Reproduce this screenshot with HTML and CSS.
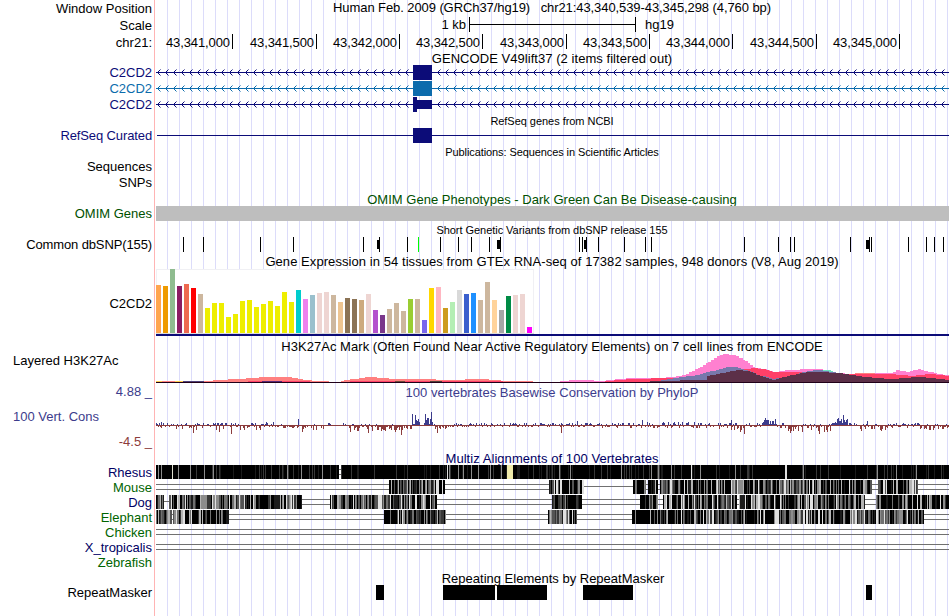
FILE: index.html
```html
<!DOCTYPE html>
<html lang="en">
<head>
    <meta charset="UTF-8">
    <title>chr21:43,340,539-43,345,298</title>
    <link rel="stylesheet" href="styles.css">
</head>
<body>
<div class="browser">
    <div class="row h17"><span class="label">Window Position</span><span class="title t-pos">Human Feb. 2009 (GRCh37/hg19) &nbsp; chr21:43,340,539-43,345,298 (4,760 bp)</span></div>
    <div class="row h17"><span class="label">Scale</span><svg id="scale" class="track"></svg></div>
    <div class="row h17"><span class="label">chr21:</span><svg id="ruler" class="track"></svg></div>

    <!-- genes -->
    <div class="row h14"><span class="label"></span><span class="title t-gencode">GENCODE V49lift37 (2 items filtered out)</span></div>
    <div class="row"><span class="label navy">C2CD2</span><svg id="gene1" class="track"></svg></div>
    <div class="row"><span class="label sky">C2CD2</span><svg id="gene2" class="track"></svg></div>
    <div class="row"><span class="label navy">C2CD2</span><svg id="gene3" class="track"></svg></div>
    <div class="row h15"><span class="label"></span><span class="title small t-refseq">RefSeq genes from NCBI</span></div>
    <div class="row"><span class="label navy tight">RefSeq Curated</span><svg id="refseq" class="track"></svg></div>
    <div class="row h15"><span class="label"></span><span class="title small t-pubs">Publications: Sequences in Scientific Articles</span></div>
    <div class="row"><span class="label">Sequences</span></div>
    <div class="row"><span class="label">SNPs</span></div>
    <div class="row h15"><span class="label"></span><span class="title green t-omim">OMIM Gene Phenotypes - Dark Green Can Be Disease-causing</span></div>
    <div class="row"><span class="label green">OMIM Genes</span><svg id="omim" class="track"></svg></div>
    <div class="row h15"><span class="label"></span><span class="title small t-snp">Short Genetic Variants from dbSNP release 155</span></div>
    <div class="row"><span class="label tight">Common dbSNP(155)</span><svg id="snp" class="track"></svg></div>

    <!-- expression and regulation -->
    <div class="row"><span class="label"></span><span class="title t-gtex">Gene Expression in 54 tissues from GTEx RNA-seq of 17382 samples, 948 donors (V8, Aug 2019)</span></div>
    <div class="row h69"><span class="label">C2CD2</span><svg id="gtex" class="track"></svg></div>
    <div class="row"><span class="label"></span><span class="title t-h3k">H3K27Ac Mark (Often Found Near Active Regulatory Elements) on 7 cell lines from ENCODE</span></div>
    <div class="row h30"><span class="label left">Layered H3K27Ac</span><svg id="h3k" class="track"></svg></div>

    <!-- conservation -->
    <div class="row"><span class="label blue">4.88 _</span><span class="title blue t-phylop">100 vertebrates Basewise Conservation by PhyloP</span></div>
    <div class="row h50">
        <div class="label stack"><span class="left blue">100 Vert. Cons</span><span class="brown">-4.5 _</span></div>
        <svg id="phylop" class="track"></svg>
    </div>
    <div class="row h15"><span class="label"></span><span class="title darkblue t-multiz">Multiz Alignments of 100 Vertebrates</span></div>
    <div class="row h15"><span class="label darkblue">Rhesus</span><svg id="rhesus" class="track"></svg></div>
    <div class="row h15"><span class="label green2">Mouse</span><svg id="mouse" class="track"></svg></div>
    <div class="row h15"><span class="label darkblue">Dog</span><svg id="dog" class="track"></svg></div>
    <div class="row h15"><span class="label green2">Elephant</span><svg id="elephant" class="track"></svg></div>
    <div class="row h15"><span class="label green2">Chicken</span><svg id="chicken" class="track"></svg></div>
    <div class="row h15"><span class="label darkblue">X_tropicalis</span><svg id="xtrop" class="track"></svg></div>
    <div class="row h15"><span class="label green2">Zebrafish</span></div>
    <div class="row h15"><span class="label"></span><span class="title t-rmsk">Repeating Elements by RepeatMasker</span></div>
    <div class="row"><span class="label">RepeatMasker</span><svg id="rmsk" class="track"></svg></div>
</div>
<script src="tracks.js"></script>
</body>
</html>
```
FILE: styles.css
```css
body {
    margin: 0;
    background: #fff;
    font-family: "Liberation Sans", Arial, sans-serif;
    font-size: 13px;
    color: #000;
}
/* guide lines every 12px, red line between labels and tracks */
.browser {
    width: 949px;
    height: 616px;
    overflow: hidden;
    background:
        linear-gradient(#ffb4b4, #ffb4b4) 154px 0 / 1px 100% no-repeat,
        linear-gradient(#fff, #fff) 0 0 / 156px 100% no-repeat,
        repeating-linear-gradient(to right, transparent 0, transparent 11px, #dcdcfa 11px, #dcdcfa 12px) 156px 0;
}
.row {
    display: flex;
    height: 16px;
    line-height: 16px;
    white-space: nowrap;
}
.h14 { height: 14px; line-height: 15px; }
.h15 { height: 15px; line-height: 15px; }
.h17 { height: 17px; line-height: 17px; }
.h30 { height: 30px; line-height: 14px; }
.h50 { height: 50px; line-height: 16px; }
.h69 { height: 69px; line-height: 69px; }
.label {
    flex: none;
    width: 152px;
    margin-right: 3px;
    text-align: right;
}
.tight { letter-spacing: -.12px; }
.track {
    flex: none;
    width: 794px;
    height: 100%;
    display: block;
    overflow: visible;
    shape-rendering: crispEdges;
}
#ruler { letter-spacing: -.1px; }
.title {
    flex: none;
    width: 794px;
    padding-top: 1px;
    text-align: center;
}
.small { font-size: 11px; }
.t-pos {
    padding-top: 0;
    line-height: 15px;
    letter-spacing: -.083px;
}
.t-gencode {
    padding-top: 0;
    letter-spacing: .05px;
}
.t-refseq { letter-spacing: -.04px; }
.t-pubs { letter-spacing: -.09px; }
.t-omim { letter-spacing: .02px; }
.t-snp { letter-spacing: -.045px; }
.t-gtex { letter-spacing: .066px; }
.t-h3k { letter-spacing: .047px; }
.t-phylop { letter-spacing: .02px; }
.t-multiz { letter-spacing: .055px; }
.t-rmsk { width: 796px; }
.left {
    text-align: left;
    padding-left: 13px;
    box-sizing: border-box;
}
.stack {
    display: flex;
    flex-direction: column;
    justify-content: flex-end;
    gap: 9px;
}
.navy { color: #0c0c78; }
.sky { color: #0c6cac; }
.green { color: #005000; }
.green2 { color: #006400; }
.darkblue { color: #000064; }
.blue { color: #3c3c8c; }
.brown { color: #8c3c3c; }
```
FILE: tracks.js
```js
var NS = 'http://www.w3.org/2000/svg';

// x is in page pixels, the track area starts at 155
function el(id, name, attrs, text) {
    var svg = document.getElementById(id);
    if (!svg.getAttribute('viewBox')) {
        svg.setAttribute('viewBox', '155 0 794 ' + svg.parentNode.clientHeight);
    }
    var e = document.createElementNS(NS, name);
    for (var k in attrs) e.setAttribute(k, attrs[k]);
    if (text) e.textContent = text;
    svg.appendChild(e);
}
function rect(id, x, y, w, h, fill) {
    el(id, 'rect', {x: x, y: y, width: w, height: h, fill: fill});
}
var seed = 7;
function rnd() {
    seed = (seed * 16807) % 2147483647;
    return seed / 2147483647;
}

// scale bar
rect('scale', 469, 0, 1, 15, '#000');
rect('scale', 635, 0, 1, 15, '#000');
rect('scale', 469, 7, 167, 1, '#000');
el('scale', 'text', {x: 466, y: 12, 'text-anchor': 'end'}, '1 kb');
el('scale', 'text', {x: 645, y: 12}, 'hg19');

// ruler
[232, 316, 399, 482, 566, 649, 732, 816, 899].forEach(function (x, i) {
    var bp = 43341000 + i * 500;
    rect('ruler', x, 0, 1, 15, '#000');
    el('ruler', 'text', {x: x - 2, y: 13, 'text-anchor': 'end'}, bp.toLocaleString('en-US'));
});

// genes
function gene(id, color) {
    rect(id, 156, 7, 793, 1, color);
    for (var x = 157; x < 948; x += 8) {
        if (x > 408 && x < 432) continue;
        rect(id, x + 1, 6, 1, 3, color);
        rect(id, x + 2, 5, 1, 1, color);
        rect(id, x + 2, 9, 1, 1, color);
        el(id, 'path', {d: 'M' + (x + 3) + ' 4h1v1h-1zM' + (x + 3) + ' 10h1v1h-1z', fill: color, opacity: .5});
    }
}
gene('gene1', '#0c0c78');
gene('gene2', '#0c6cac');
gene('gene3', '#0c0c78');
rect('gene1', 413, 0, 19, 15, '#0c0c78');
rect('gene2', 413, 0, 19, 15, '#0c6cac');
rect('gene3', 413, 0, 4, 15, '#0c0c78');
rect('gene3', 413, 3, 19, 9, '#0c0c78');
rect('refseq', 157, 7, 792, 1, '#0c0c78');
rect('refseq', 413, 0, 19, 15, '#0c0c78');

rect('omim', 156, 0, 793, 15, '#bebebe');

// snps
[183, 203, 260, 293, 363, 379, 407, 440, 458, 471, 489, 500, 579, 582, 586, 598, 624,
 645, 651, 744, 778, 790, 794, 850, 869, 871, 908, 926, 934, 943].forEach(function (x) {
    rect('snp', x, 0, 1, 15, '#000');
});
rect('snp', 418, 0, 1, 15, '#00ff00');
[[377, 3], [497, 4], [584, 3], [866, 4]].forEach(function (b) {
    rect('snp', b[0], 3, b[1], 9, '#000');
});

// gtex
var gtex = [
    [48, 'ffa54f'], [47, 'ee9a00'], [64, '8fbc8f'], [47, '8b1c62'], [49, 'ee6a50'], [45, 'ff0000'], [39, 'cdb79e'],
    [25, 'eeee00'], [30, 'eeee00'], [30, 'eeee00'], [16, 'eeee00'], [19, 'eeee00'], [32, 'eeee00'], [33, 'eeee00'],
    [26, 'eeee00'], [29, 'eeee00'], [32, 'eeee00'], [27, 'eeee00'], [41, 'eeee00'], [31, 'eeee00'], [43, '00cdcd'],
    [34, 'ee82ee'], [38, '9ac0cd'], [40, 'eed5d2'], [41, 'eed5d2'], [38, 'cdb79e'], [31, 'eec591'], [35, '8b7355'],
    [34, '8b7355'], [33, 'cdaa7d'], [39, 'eed5d2'], [23, 'b452cd'], [18, '7a378b'], [24, 'cdb79e'], [30, 'cdb79e'],
    [22, 'cdb79e'], [34, '9acd32'], [34, 'cdb79e'], [13, '7a67ee'], [45, 'ffd700'], [46, 'ffb6c1'], [25, 'cd9b1d'],
    [31, 'b4eeb4'], [43, 'd9d9d9'], [39, '3a5fcd'], [40, '1e90ff'], [33, 'cdb79e'], [51, 'cdb79e'], [33, 'ffd39b'],
    [23, 'a6a6a6'], [37, '008b45'], [38, 'eed5d2'], [39, 'eed5d2'], [6, 'ff00ff']
];
rect('gtex', 156, 0, 378, 65, '#f0f0f4');
rect('gtex', 157, 1, 376, 63, '#fff');
gtex.forEach(function (b, i) {
    rect('gtex', 156 + i * 7, 64 - b[0], 5, b[0], '#' + b[1]);
});
rect('gtex', 156, 64, 378, 1, '#dcdcdc');
rect('gtex', 156, 65, 793, 2, '#0c0c78');

// layered h3k27ac, points are x,height above the base line
function area(points, fill) {
    var d = 'M' + points[0][0] + ' 28';
    for (var i = 0; i < points.length - 1; i++) {
        var a = points[i], b = points[i + 1];
        for (var x = a[0]; x < b[0]; x += 3) {
            var h = a[1] + (b[1] - a[1]) * (x - a[0]) / (b[0] - a[0]);
            var y = 28 - Math.round(h);
            d += 'L' + x + ' ' + y + 'H' + Math.min(x + 3, b[0]);
        }
    }
    d += 'V28Z';
    el('h3k', 'path', {d: d, fill: fill});
}
area([[156, 1], [212, 1], [213, 2], [240, 3], [250, 4], [263, 5], [283, 5], [295, 4], [303, 2], [317, 1], [340, 0], [341, 1],
    [353, 3], [368, 5], [380, 4], [392, 3], [407, 3], [427, 3], [443, 2], [453, 2], [477, 3], [495, 2], [503, 1], [560, 0]], '#ff8080');
area([[248, 1], [310, 1]], '#ff4068');
area([[350, 1], [503, 1]], '#ff4068');
area([[156, 1], [162, 1]], '#ffd050');
area([[175, 1], [183, 1]], '#ffd050');
area([[183, 1], [204, 1]], '#504078');
area([[262, 1], [282, 1]], '#582878');
area([[395, 1], [405, 1]], '#704838');
area([[430, 1], [442, 1]], '#504038');
area([[560, 1], [573, 2], [582, 2], [600, 1], [620, 3], [630, 4], [660, 4], [670, 5], [683, 7], [692, 11], [700, 15], [708, 20],
    [717, 26], [723, 28], [733, 27], [740, 24], [745, 21], [750, 17], [755, 14], [767, 12], [773, 10], [782, 11], [788, 12],
    [810, 13], [820, 13], [830, 10], [847, 8], [890, 9], [897, 12], [907, 10], [918, 13], [925, 11], [937, 8], [949, 6]], '#ff80d0');
area([[817, 12], [825, 12], [833, 11]], '#70e0c0');
area([[849, 8], [857, 9], [866, 9], [878, 8]], '#ff8080');
area([[605, 1], [630, 3], [707, 5], [717, 8], [730, 11], [752, 14], [763, 13], [772, 10], [797, 10], [820, 9], [847, 8],
    [870, 8], [890, 8], [910, 6], [930, 8], [949, 6]], '#ff4068');
area([[655, 1], [680, 5], [697, 7], [707, 10], [720, 13], [727, 15], [735, 15], [745, 12], [757, 7], [773, 3], [793, 7], [807, 11],
    [817, 12], [830, 10], [850, 7], [863, 4], [897, 3]], '#7878ac');
area([[650, 1], [706, 2], [707, 6], [717, 8], [727, 10], [737, 12], [747, 11], [757, 7], [773, 2], [787, 6], [797, 8], [808, 10], [820, 10],
    [837, 9], [850, 7], [863, 5], [890, 3], [917, 5], [930, 4], [949, 2]], '#5c3048');
rect('h3k', 156, 28, 793, 1, '#200018');

// phylop: from, to, max up, max down
rect('phylop', 156, 25, 793, 1, '#8c3c3c');
[
    [156, 185, 2, 4], [185, 236, 2, 5], [236, 262, 2, 5], [262, 275, 3, 2], [275, 300, 1, 3], [300, 325, 1, 5],
    [325, 345, 2, 1], [345, 385, 1, 6], [385, 412, 1, 6], [412, 420, 7, 0], [424, 433, 8, 0], [433, 450, 1, 4],
    [450, 540, 2, 2], [540, 600, 2, 2], [600, 640, 2, 3], [640, 700, 3, 3], [700, 725, 2, 4], [725, 745, 2, 7],
    [745, 762, 2, 2], [762, 776, 6, 0], [776, 785, 2, 3], [785, 832, 1, 7], [832, 848, 6, 0], [848, 860, 3, 1],
    [860, 890, 1, 6], [890, 920, 2, 3], [920, 949, 1, 5]
].forEach(function (s) {
    for (var x = s[0]; x < s[1]; x++) {
        var r = rnd(), v = rnd();
        if (s[3] === 0 || (s[2] > 1 && r < .38) || r < .12) {
            rect('phylop', x, 25 - Math.ceil(v * s[2]), 1, Math.ceil(v * s[2]), '#3c3c8c');
        } else if (r < .88) {
            rect('phylop', x, 25, 1, 1 + Math.floor(Math.pow(v, 1.4) * s[3]), '#8c3c3c');
        }
    }
});
[[161, 3], [298, 6], [412, 11], [415, 10], [418, 6], [425, 11], [428, 7], [431, 13], [577, 4], [642, 5], [731, 5],
 [765, 7], [775, 6], [838, 7], [843, 10], [867, 4]].forEach(function (s) {
    rect('phylop', s[0], 25 - s[1], 1, s[1], '#3c3c8c');
});
[[193, 8], [219, 7], [231, 9], [302, 7], [350, 7], [368, 8], [395, 7], [401, 10], [437, 8], [561, 8], [744, 9],
 [790, 8], [819, 9], [824, 7]].forEach(function (s) {
    rect('phylop', s[0], 25, 1, s[1], '#8c3c3c');
});

// multiz
var shades = ['#000', '#1c1c1c', '#383838', '#545454', '#707070', '#8c8c8c', '#b4b4b4', '#e0e0e0'];
function barcode(id, from, to, light) {
    var x = from;
    rect(id, from, 0, to - from, 14, '#000');
    while (x < to) {
        var w = rnd() < .75 ? 1 : 2;
        var s = rnd() < light ? Math.floor(rnd() * shades.length) : 0;
        w = Math.min(w, to - x);
        if (s) rect(id, x, 0, w, 14, shades[s]);
        x += w;
    }
}
function doubleLine(id) {
    rect(id, 156, 4, 793, 1, '#707070');
    rect(id, 156, 9, 793, 1, '#707070');
}
function singleLine(id, from, to) {
    rect(id, from, 0, to - from, 14, '#fff');
    for (var x = 167; x < to; x += 12) {
        if (x >= from) rect(id, x, 0, 1, 14, '#dcdcfa');
    }
    rect(id, from, 6, to - from, 1, '#707070');
}
['mouse', 'dog', 'elephant', 'chicken', 'xtrop'].forEach(doubleLine);

rect('rhesus', 156, 0, 793, 14, '#000');
for (var x = 156; x < 949; x++) {
    if (rnd() < .16) rect('rhesus', x, 0, 1, 14, shades[1 + Math.floor(rnd() * 2)]);
}
[158, 161, 178, 190, 204, 213, 287, 301, 322, 449, 458, 463, 471, 478, 490, 501, 559, 570, 621, 651, 658,
 671, 700, 735, 803, 877, 896, 916].forEach(function (x) {
    rect('rhesus', x, 0, 1, 14, '#8c8c8c');
});
rect('rhesus', 172, 0, 1, 14, '#e0e0d0');
rect('rhesus', 339, 0, 2, 14, '#fff');
rect('rhesus', 339, 4, 2, 1, '#707070');
rect('rhesus', 339, 9, 2, 1, '#707070');
rect('rhesus', 447, 0, 1, 14, '#e0e0e0');
rect('rhesus', 691, 0, 1, 14, '#e0e0e0');
rect('rhesus', 785, 0, 2, 14, '#e0e0e0');
rect('rhesus', 507, 0, 6, 14, '#f0ebaa');

singleLine('mouse', 584, 633);
[[389, 403, .5], [403, 414, .8], [414, 445, .65], [549, 584, .7], [633, 646, .7], [648, 658, .7], [660, 732, .7],
 [732, 745, .95], [745, 790, .6], [790, 810, .9], [810, 872, .6], [878, 918, .7]].forEach(function (b) {
    barcode('mouse', b[0], b[1], b[2]);
});
rect('mouse', 738, 0, 5, 14, '#8c8c8c');
singleLine('dog', 164, 169);
[[156, 164, .9], [169, 200, .7], [200, 222, .9], [222, 270, .8], [270, 302, .65], [330, 384, .75], [384, 410, .9],
 [410, 437, .6], [552, 582, .7], [640, 658, .6], [663, 737, .75], [739, 762, .95], [762, 865, .65], [876, 949, .7]].forEach(function (b) {
    barcode('dog', b[0], b[1], b[2]);
});
rect('dog', 201, 0, 5, 14, '#8c8c8c');
rect('dog', 207, 0, 4, 14, '#383838');
rect('dog', 216, 0, 3, 14, '#8c8c8c');
rect('dog', 274, 0, 6, 14, '#1c1c1c');
[[156, 172, .8], [173, 200, .7], [200, 229, .55], [384, 394, .4], [394, 446, .75], [548, 577, .65], [632, 654, .2],
 [654, 700, .65], [700, 765, .8], [765, 774, .2], [774, 815, .85], [815, 850, .45], [850, 924, .75]].forEach(function (b) {
    barcode('elephant', b[0], b[1], b[2]);
});
rect('elephant', 775, 0, 4, 14, '#e0e0e0');

// repeats
[[376, 8], [443, 52], [497, 50], [583, 50], [866, 6]].forEach(function (b) {
    rect('rmsk', b[0], 0, b[1], 15, '#000');
});
```
